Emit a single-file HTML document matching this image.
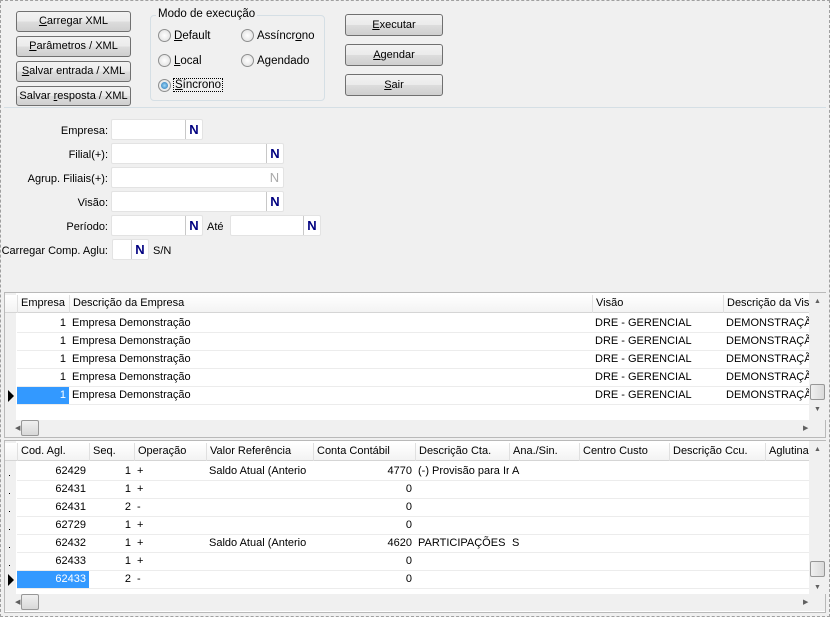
<!DOCTYPE html>
<html><head><meta charset="utf-8"><style>
*{box-sizing:border-box;margin:0;padding:0}
body{width:830px;height:617px;background:#f0f0f0;font-family:"Liberation Sans",sans-serif;font-size:11px;color:#000;position:relative;overflow:hidden}
.a{position:absolute;white-space:nowrap}
.frame{left:0;top:0;width:830px;height:617px;border:1px dashed #a0a0a0}
.btn{position:absolute;border:1px solid #707070;border-radius:3px;background:linear-gradient(#f2f2f2,#ebebeb 50%,#dddddd 50%,#cfcfcf);text-align:center;font-size:11px;line-height:18px;white-space:nowrap;overflow:hidden}
.btn u{text-decoration:underline}
.grp{border:1px solid #d5dfe5;border-radius:4px}
.rad{position:absolute;width:13px;height:13px;border-radius:50%;border:1px solid #8e8f8f;background:radial-gradient(#fff,#dcdcdc)}
.rad.on::after{content:"";position:absolute;left:2px;top:2px;width:7px;height:7px;border-radius:50%;background:radial-gradient(#9fd9f9,#1f6fb3)}
.lbl{position:absolute;font-size:11px;text-align:right;white-space:nowrap}
.inp{position:absolute;height:21px;background:#fff;border:1px solid #e3e3e3;border-radius:2px}
.inp .n{position:absolute;right:0;top:0;width:17px;height:19px;border-left:1px solid #c8c8c8;font-weight:bold;color:#000080;font-size:13px;text-align:center;line-height:19px}
.inp .n.g{color:#aaa;font-weight:normal;border-left:none}
.grid{position:absolute;background:#fff;border:1px solid #b9b9b9}
.hdr{position:absolute;height:18px;background:linear-gradient(#fff,#f3f3f3);border-bottom:1px solid #d5d5d5}
.hc{position:absolute;top:0;height:18px;line-height:17px;padding-left:3px;border-left:1px solid #e0e0e0;white-space:nowrap;overflow:hidden}
.row{position:absolute;height:18px;border-bottom:1px solid #ececec}
.c{position:absolute;top:0;height:17px;line-height:17px;white-space:nowrap;overflow:hidden;padding:0 3px}
.r{text-align:right}
.sel{background:#3399ff;color:#fff}
.vs{position:absolute;width:17px;background:#f0f0f0}
.hs{position:absolute;height:17px;background:#f0f0f0}
.thumb{position:absolute;border:1px solid #979797;border-radius:2px;background:linear-gradient(90deg,#f0f0f0,#dadada)}
.arr{position:absolute;font-size:7px;color:#606060}
.ind{position:absolute;left:0;width:11px;background:#f0f0f0}
</style></head><body>
<div class="a frame"></div>

<div class="btn" style="left:16px;top:11px;width:115px;height:21px"><u>C</u>arregar XML</div>
<div class="btn" style="left:16px;top:36px;width:115px;height:21px"><u>P</u>arâmetros / XML</div>
<div class="btn" style="left:16px;top:61px;width:115px;height:21px"><u>S</u>alvar entrada / XML</div>
<div class="btn" style="left:16px;top:86px;width:115px;height:20px">Salvar <u>r</u>esposta / XML</div>

<div class="a grp" style="left:150px;top:15px;width:175px;height:86px"></div>
<div class="a" style="left:156px;top:8px;background:#f0f0f0;padding:0 2px;font-size:11.5px">Modo de execução</div>
<div class="rad" style="left:158px;top:29px"></div><div class="a" style="left:174px;top:30px;font-size:11.5px"><u>D</u>efault</div>
<div class="rad" style="left:241px;top:29px"></div><div class="a" style="left:257px;top:30px;font-size:11.5px">Assíncr<u>o</u>no</div>
<div class="rad" style="left:158px;top:54px"></div><div class="a" style="left:174px;top:55px;font-size:11.5px"><u>L</u>ocal</div>
<div class="rad" style="left:241px;top:54px"></div><div class="a" style="left:257px;top:55px;font-size:11.5px">A<u>g</u>endado</div>
<div class="rad on" style="left:158px;top:79px"></div><div class="a" style="left:173px;top:78px;font-size:11.5px;border:1px dotted #000;padding:0 1px"><u>S</u>íncrono</div>

<div class="btn" style="left:345px;top:14px;width:98px;height:22px;line-height:20px"><u>E</u>xecutar</div>
<div class="btn" style="left:345px;top:44px;width:98px;height:22px;line-height:20px"><u>A</u>gendar</div>
<div class="btn" style="left:345px;top:74px;width:98px;height:22px;line-height:20px"><u>S</u>air</div>

<div class="a" style="left:4px;top:107px;width:822px;height:1px;background:#d5dfe5"></div>

<div class="lbl" style="right:722px;top:125px">Empresa:</div>
<div class="inp" style="left:111px;top:119px;width:92px"><div class="n">N</div></div>
<div class="lbl" style="right:722px;top:149px">Filial(+):</div>
<div class="inp" style="left:111px;top:143px;width:173px"><div class="n">N</div></div>
<div class="lbl" style="right:722px;top:173px">Agrup. Filiais(+):</div>
<div class="inp" style="left:111px;top:167px;width:173px"><div class="n g">N</div></div>
<div class="lbl" style="right:722px;top:197px">Visão:</div>
<div class="inp" style="left:111px;top:191px;width:173px"><div class="n">N</div></div>
<div class="lbl" style="right:722px;top:221px">Período:</div>
<div class="inp" style="left:111px;top:215px;width:92px"><div class="n">N</div></div>
<div class="a" style="left:207px;top:221px;font-size:11px">Até</div>
<div class="inp" style="left:230px;top:215px;width:91px"><div class="n">N</div></div>
<div class="lbl" style="right:722px;top:245px">Carregar Comp. Aglu:</div>
<div class="inp" style="left:112px;top:239px;width:37px"><div class="n">N</div></div>
<div class="a" style="left:153px;top:245px;font-size:11px">S/N</div>

<!-- grid 1 -->
<div class="grid" style="left:4px;top:292px;width:822px;height:146px">
 <div class="ind" style="top:0;height:128px"></div>
 <div class="hdr" style="left:0;top:2px;width:805px">
  <div class="hc" style="left:12px;width:52px">Empresa</div>
  <div class="hc" style="left:64px;width:523px">Descrição da Empresa</div>
  <div class="hc" style="left:587px;width:131px">Visão</div>
  <div class="hc" style="left:718px;width:87px">Descrição da Vis</div>
 </div>
 <div id="g1"></div>
 <div class="vs" style="left:804px;top:0;height:127px"><div class="arr" style="left:5px;top:5px">▲</div><div class="thumb" style="left:1px;top:91px;width:15px;height:16px"></div><div class="arr" style="left:5px;top:113px">▼</div></div>
 <div class="hs" style="left:0;top:127px;width:820px"><div class="arr" style="left:10px;top:4px">◀</div><div class="thumb" style="left:16px;top:0;width:18px;height:16px;background:linear-gradient(#f0f0f0,#d8d8d8)"></div><div class="arr" style="left:798px;top:4px">▶</div></div>
</div>

<!-- grid 2 -->
<div class="grid" style="left:4px;top:440px;width:822px;height:173px">
 <div class="ind" style="top:0;height:154px"></div>
 <div class="hdr" style="left:0;top:2px;width:805px">
  <div class="hc" style="left:12px;width:72px">Cod. Agl.</div>
  <div class="hc" style="left:84px;width:45px">Seq.</div>
  <div class="hc" style="left:129px;width:72px">Operação</div>
  <div class="hc" style="left:201px;width:107px">Valor Referência</div>
  <div class="hc" style="left:308px;width:102px">Conta Contábil</div>
  <div class="hc" style="left:410px;width:94px">Descrição Cta.</div>
  <div class="hc" style="left:504px;width:70px">Ana./Sin.</div>
  <div class="hc" style="left:574px;width:90px">Centro Custo</div>
  <div class="hc" style="left:664px;width:96px">Descrição Ccu.</div>
  <div class="hc" style="left:760px;width:45px">Aglutina</div>
 </div>
 <div id="g2"></div>
 <div class="vs" style="left:804px;top:0;height:153px"><div class="arr" style="left:5px;top:5px">▲</div><div class="thumb" style="left:1px;top:120px;width:15px;height:16px"></div><div class="arr" style="left:5px;top:143px">▼</div></div>
 <div class="hs" style="left:0;top:153px;width:820px"><div class="arr" style="left:10px;top:4px">◀</div><div class="thumb" style="left:16px;top:0;width:18px;height:16px;background:linear-gradient(#f0f0f0,#d8d8d8)"></div><div class="arr" style="left:798px;top:4px">▶</div></div>
</div>

<script>
var g1=document.getElementById('g1'),h='';
for(var i=0;i<5;i++){var t=22+i*18,s=i==4;
h+='<div class="row" style="left:12px;top:'+t+'px;width:792px">'+
'<div class="c r'+(s?' sel':'')+'" style="left:0;width:52px">1</div>'+
'<div class="c" style="left:52px;width:523px">Empresa Demonstração</div>'+
'<div class="c" style="left:575px;width:131px">DRE - GERENCIAL</div>'+
'<div class="c" style="left:706px;width:86px">DEMONSTRAÇÃO</div></div>';
if(s)h+='<div class="a" style="left:3px;top:'+(t+3)+'px;width:0;height:0;border-top:6px solid transparent;border-bottom:6px solid transparent;border-left:6px solid #000"></div>';}
g1.innerHTML=h;
var d=[['62429','1','+','Saldo Atual (Anterio','4770','(-) Provisão para Ir','A'],['62431','1','+','','0','',''],['62431','2','-','','0','',''],['62729','1','+','','0','',''],['62432','1','+','Saldo Atual (Anterio','4620','PARTICIPAÇÕES','S'],['62433','1','+','','0','',''],['62433','2','-','','0','','']];
h='';
for(i=0;i<7;i++){var t=22+i*18,s=i==6,r=d[i];
h+='<div class="row" style="left:12px;top:'+t+'px;width:792px">'+
'<div class="c r'+(s?' sel':'')+'" style="left:0;width:72px">'+r[0]+'</div>'+
'<div class="c r" style="left:72px;width:45px">'+r[1]+'</div>'+
'<div class="c" style="left:117px;width:72px">'+r[2]+'</div>'+
'<div class="c" style="left:189px;width:107px">'+r[3]+'</div>'+
'<div class="c r" style="left:296px;width:102px">'+r[4]+'</div>'+
'<div class="c" style="left:398px;width:94px">'+r[5]+'</div>'+
'<div class="c" style="left:492px;width:70px">'+r[6]+'</div></div>';
if(s)h+='<div class="a" style="left:3px;top:'+(t+3)+'px;width:0;height:0;border-top:6px solid transparent;border-bottom:6px solid transparent;border-left:6px solid #000"></div>';
else h+='<div class="a" style="left:4px;top:'+(t+12)+'px;width:1px;height:1px;background:#000"></div>';}
document.getElementById('g2').innerHTML=h;
</script>
</body></html>
